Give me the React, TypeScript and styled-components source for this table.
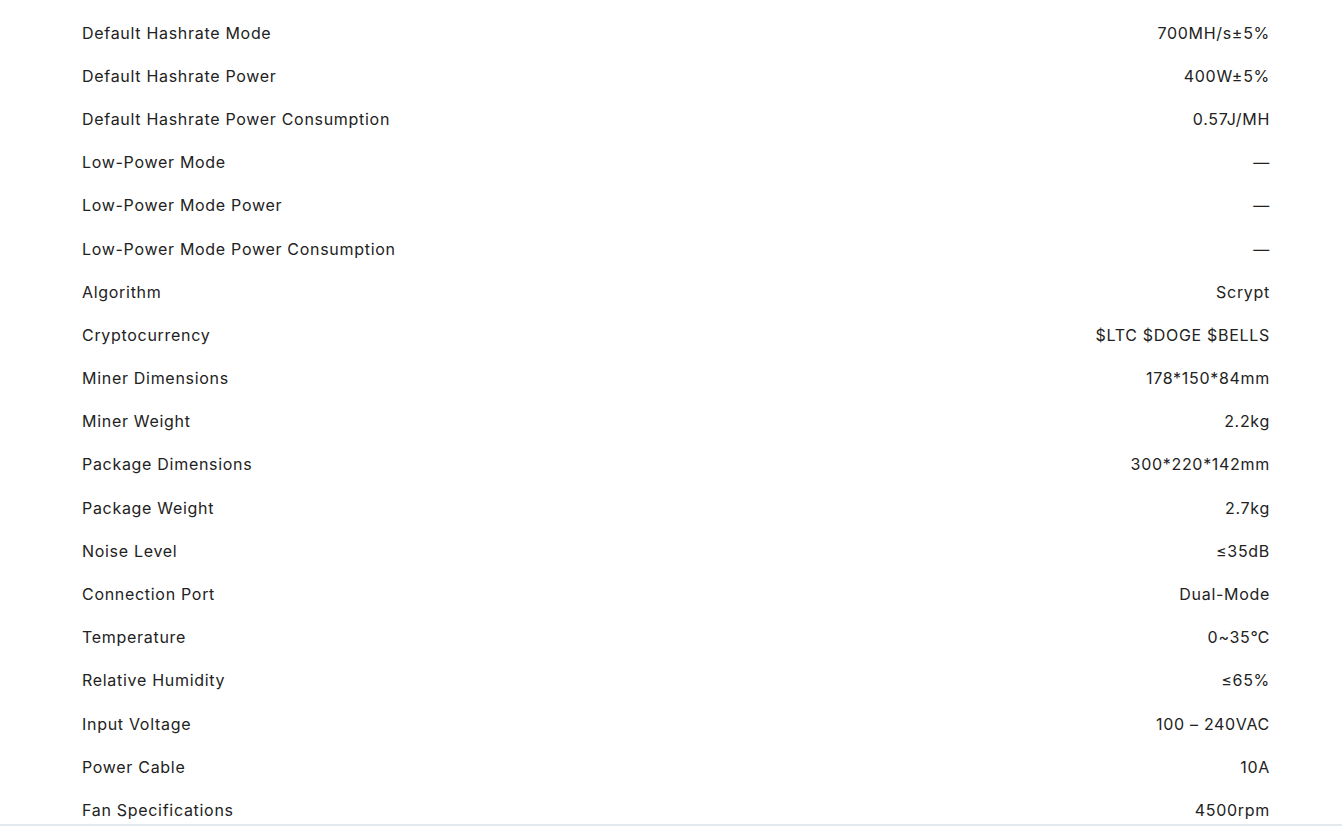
import React from 'react';
import styled, { createGlobalStyle } from 'styled-components';

const specs: [string, string][] = [
  ['Default Hashrate Mode', '700MH/s±5%'],
  ['Default Hashrate Power', '400W±5%'],
  ['Default Hashrate Power Consumption', '0.57J/MH'],
  ['Low-Power Mode', '—'],
  ['Low-Power Mode Power', '—'],
  ['Low-Power Mode Power Consumption', '—'],
  ['Algorithm', 'Scrypt'],
  ['Cryptocurrency', '$LTC $DOGE $BELLS'],
  ['Miner Dimensions', '178*150*84mm'],
  ['Miner Weight', '2.2kg'],
  ['Package Dimensions', '300*220*142mm'],
  ['Package Weight', '2.7kg'],
  ['Noise Level', '≤35dB'],
  ['Connection Port', 'Dual-Mode'],
  ['Temperature', '0~35℃'],
  ['Relative Humidity', '≤65%'],
  ['Input Voltage', '100 – 240VAC'],
  ['Power Cable', '10A'],
  ['Fan Specifications', '4500rpm'],
];

export default function App() {
  return (
    <>
      <GlobalStyle />
      <SpecList>
        {specs.map(([label, value]) => (
          <SpecRow key={label}>
            <SpecLabel>{label}</SpecLabel>
            <SpecValue>{value}</SpecValue>
          </SpecRow>
        ))}
      </SpecList>
      <BottomEdge />
    </>
  );
}

const GlobalStyle = createGlobalStyle`
  html, body {
    margin: 0;
    background: #ffffff;
    overflow: hidden;
  }
  body {
    font-family: Inter, "Noto Sans", sans-serif;
  }
`;

const SpecList = styled.div`
  padding: 11px 72px 0 82px;
  display: flex;
  flex-direction: column;
`;

const SpecRow = styled.div`
  display: flex;
  justify-content: space-between;
  align-items: center;
  height: 43.2px;
  font-size: 16px;
  letter-spacing: 0.7px;
  color: #222222;
`;

const SpecLabel = styled.span``;

const SpecValue = styled.span`
  text-align: right;
`;

const BottomEdge = styled.div`
  position: fixed;
  left: 0;
  right: 0;
  bottom: 0;
  height: 2px;
  background: #e3e9ec;
`;
